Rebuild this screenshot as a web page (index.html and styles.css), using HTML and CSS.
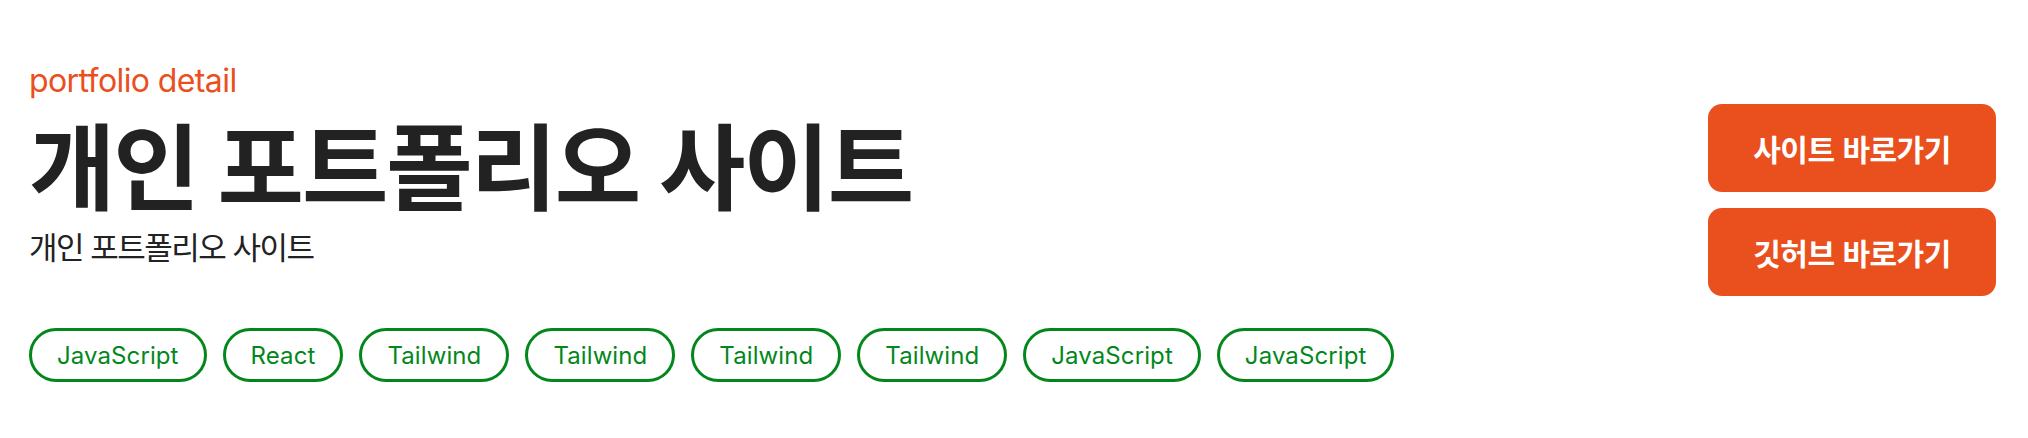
FILE: index.html
```html
<!DOCTYPE html>
<html lang="ko">
<head>
<meta charset="utf-8">
<title>portfolio detail</title>
<link rel="stylesheet" href="styles.css">
</head>
<body>
<section class="detail">
  <div class="info">
    <p class="eyebrow">portfolio detail</p>
    <h1 class="title">개인 포트폴리오 사이트</h1>
    <p class="desc">개인 포트폴리오 사이트</p>
    <ul class="tags">
      <li class="tag">JavaScript</li>
      <li class="tag">React</li>
      <li class="tag">Tailwind</li>
      <li class="tag">Tailwind</li>
      <li class="tag">Tailwind</li>
      <li class="tag">Tailwind</li>
      <li class="tag">JavaScript</li>
      <li class="tag">JavaScript</li>
    </ul>
  </div>
  <div class="actions">
    <a class="btn" href="#">사이트 바로가기</a>
    <a class="btn" href="#">깃허브 바로가기</a>
  </div>
</section>
</body>
</html>
```

FILE: styles.css
```css
* { box-sizing: border-box; }
html, body { margin: 0; padding: 0; background: #fff; }
body {
  font-family: Inter, "Noto Sans CJK KR", sans-serif;
  color: #222;
}
.detail {
  display: flex;
  justify-content: space-between;
  align-items: flex-start;
  padding: 61px 32px 0 29px;
}
.info { display: flex; flex-direction: column; }
.eyebrow {
  margin: 0;
  font-size: 32px;
  line-height: 39px;
  color: #e9501e;
  letter-spacing: -0.6px;
}
.title {
  margin: 12px 0 0;
  font-family: Inter, "Noto Sans CJK KR", sans-serif;
  font-weight: 700;
  font-size: 94px;
  line-height: 114px;
  letter-spacing: -2.2px;
  color: #222;
}
.desc {
  margin: 3px 0 0;
  font-family: Inter, "Noto Sans CJK KR", sans-serif;
  font-size: 31px;
  line-height: 38px;
  letter-spacing: -1.5px;
  color: #222;
}
.tags {
  list-style: none;
  margin: 61px 0 0;
  padding: 0;
  display: flex;
  gap: 16px;
}
.tag {
  height: 54px;
  padding: 0 25px;
  border: 3px solid #03871d;
  border-radius: 27px;
  display: flex;
  align-items: center;
  font-size: 24px;
  letter-spacing: 0.1px;
  color: #03871d;
}
.actions {
  display: flex;
  flex-direction: column;
  gap: 16px;
  margin-top: 43px;
}
.btn {
  width: 288px;
  height: 88px;
  border-radius: 14px;
  background: #e9501e;
  color: #fff;
  text-decoration: none;
  display: flex;
  align-items: center;
  justify-content: center;
  font-family: "Noto Sans CJK KR", sans-serif;
  font-weight: 700;
  font-size: 30px;
  letter-spacing: -0.5px;
}
```
